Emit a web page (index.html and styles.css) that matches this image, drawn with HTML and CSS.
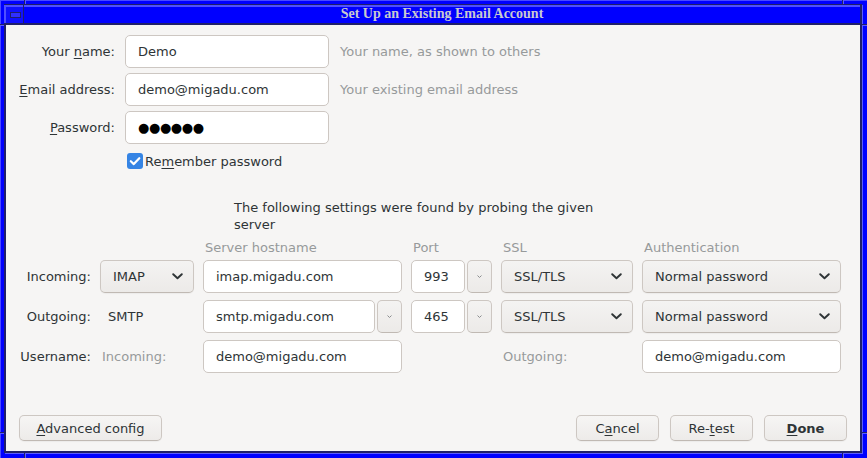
FILE: index.html
```html
<!DOCTYPE html>
<html>
<head>
<meta charset="utf-8">
<title>Set Up an Existing Email Account</title>
<link rel="stylesheet" href="styles.css">
</head>
<body>
<div class="frame">
  <span class="notch notch-v notch-top-l"></span>
  <span class="notch notch-v notch-top-r"></span>
  <span class="notch notch-v notch-bot-l"></span>
  <span class="notch notch-v notch-bot-r"></span>
  <span class="notch notch-h notch-left-t"></span>
  <span class="notch notch-h notch-left-b"></span>
  <span class="notch notch-h notch-right-t"></span>
  <span class="notch notch-h notch-right-b"></span>
  <div class="win">
    <div class="titlebar">
      <div class="menubtn"><span class="menuicon"></span></div>
      <div class="title">Set Up an Existing Email Account</div>
    </div>
    <div class="dialog">
      <div class="identity">
        <div class="lbl">Your <u>n</u>ame:</div>
        <div class="field">Demo</div>
        <div class="hint">Your name, as shown to others</div>

        <div class="lbl"><u>E</u>mail address:</div>
        <div class="field">demo@migadu.com</div>
        <div class="hint">Your existing email address</div>

        <div class="lbl"><u>P</u>assword:</div>
        <div class="field dots">●●●●●●</div>
        <div class="hint"></div>

        <div class="remember">
          <span class="check"><svg width="16" height="16" viewBox="0 0 16 16"><path d="M3.8 8.2 L6.8 11.1 L12.3 5.2" fill="none" stroke="#ffffff" stroke-width="2.2" stroke-linecap="round" stroke-linejoin="round"/></svg></span>
          <span>Re<u>m</u>ember password</span>
        </div>
      </div>

      <p class="probe">The following settings were found by probing the given server</p>

      <div class="servers servers-head">
        <span></span>
        <span></span>
        <span class="colhead">Server hostname</span>
        <span class="colhead">Port</span>
        <span class="colhead">SSL</span>
        <span class="colhead">Authentication</span>
      </div>

      <div class="servers">
        <div class="rowlbl">Incoming:</div>
        <div class="combo"><span>IMAP</span><svg class="chev" width="11" height="7" viewBox="0 0 11 7"><path d="M1.2 1.2 L5.5 5.3 L9.8 1.2" fill="none" stroke="#2e3436" stroke-width="1.9" stroke-linecap="round" stroke-linejoin="round"/></svg></div>
        <div class="field">imap.migadu.com</div>
        <div class="pair">
          <div class="field port">993</div>
          <div class="spin"><svg width="5" height="3" viewBox="0 0 5 3"><path d="M0.5 0.5 L2.5 2.5 L4.5 0.5" fill="none" stroke="#8a8c8e" stroke-width="1"/></svg></div>
        </div>
        <div class="combo"><span>SSL/TLS</span><svg class="chev" width="11" height="7" viewBox="0 0 11 7"><path d="M1.2 1.2 L5.5 5.3 L9.8 1.2" fill="none" stroke="#2e3436" stroke-width="1.9" stroke-linecap="round" stroke-linejoin="round"/></svg></div>
        <div class="combo"><span>Normal password</span><svg class="chev" width="11" height="7" viewBox="0 0 11 7"><path d="M1.2 1.2 L5.5 5.3 L9.8 1.2" fill="none" stroke="#2e3436" stroke-width="1.9" stroke-linecap="round" stroke-linejoin="round"/></svg></div>

        <div class="rowlbl">Outgoing:</div>
        <div class="plain">SMTP</div>
        <div class="pair">
          <div class="field grow">smtp.migadu.com</div>
          <div class="spin"><svg width="5" height="3" viewBox="0 0 5 3"><path d="M0.5 0.5 L2.5 2.5 L4.5 0.5" fill="none" stroke="#8a8c8e" stroke-width="1"/></svg></div>
        </div>
        <div class="pair">
          <div class="field port">465</div>
          <div class="spin"><svg width="5" height="3" viewBox="0 0 5 3"><path d="M0.5 0.5 L2.5 2.5 L4.5 0.5" fill="none" stroke="#8a8c8e" stroke-width="1"/></svg></div>
        </div>
        <div class="combo"><span>SSL/TLS</span><svg class="chev" width="11" height="7" viewBox="0 0 11 7"><path d="M1.2 1.2 L5.5 5.3 L9.8 1.2" fill="none" stroke="#2e3436" stroke-width="1.9" stroke-linecap="round" stroke-linejoin="round"/></svg></div>
        <div class="combo"><span>Normal password</span><svg class="chev" width="11" height="7" viewBox="0 0 11 7"><path d="M1.2 1.2 L5.5 5.3 L9.8 1.2" fill="none" stroke="#2e3436" stroke-width="1.9" stroke-linecap="round" stroke-linejoin="round"/></svg></div>

        <div class="rowlbl">Username:</div>
        <div class="plain dim">Incoming:</div>
        <div class="field">demo@migadu.com</div>
        <div></div>
        <div class="plain dim">Outgoing:</div>
        <div class="field">demo@migadu.com</div>
      </div>

      <div class="actions">
        <button class="btn btn-wide"><u>A</u>dvanced config</button>
        <div class="spacer"></div>
        <button class="btn">C<u>a</u>ncel</button>
        <button class="btn">Re-<u>t</u>est</button>
        <button class="btn btn-default"><u>D</u>one</button>
      </div>
    </div>
  </div>
</div>
</body>
</html>
```
FILE: styles.css
```css
html, body {
  margin: 0;
  padding: 0;
  background: #0000ff;
  overflow: hidden;
}

.frame {
  position: relative;
  width: 867px;
  height: 458px;
  box-sizing: border-box;
  padding: 4px 5px 5px 4px;
  background: #0000ff;
  box-shadow: inset 1px 1px 0 #4a4aff;
}

.notch {
  position: absolute;
  background: #20206a;
}
.notch-v { width: 1px; height: 4px; box-shadow: 1px 0 0 #5a5aff; }
.notch-h { width: 4px; height: 1px; box-shadow: 0 1px 0 #5a5aff; }
.notch-top-l { left: 24px; top: 0; }
.notch-top-r { left: 842px; top: 0; }
.notch-bot-l { left: 24px; bottom: 0; height: 5px; }
.notch-bot-r { left: 842px; bottom: 0; height: 5px; }
.notch-left-t { left: 0; top: 24px; }
.notch-left-b { left: 0; top: 432px; }
.notch-right-t { right: 0; top: 24px; width: 5px; }
.notch-right-b { right: 0; top: 432px; width: 5px; }

.win {
  height: 100%;
  display: flex;
  flex-direction: column;
  box-shadow: 1px 1px 0 #5a5aff;
}

.titlebar {
  display: flex;
  height: 18px;
  border-top: 1px solid #20206a;
  border-right: 2px solid #20206a;
  background: #0000ff;
}

.menubtn {
  width: 19px;
  height: 18px;
  border-right: 1px solid #20206a;
  box-shadow: inset 2px 2px 0 #5050ff;
  background: #1010ff;
  display: flex;
  align-items: flex-start;
  justify-content: flex-start;
}

.menuicon {
  display: block;
  width: 9px;
  height: 4px;
  margin: 7px 0 0 6px;
  border: 1px solid #20206a;
  background: #3030ff;
}

.title {
  flex: 1;
  height: 18px;
  box-shadow: inset 0 2px 0 #5050ff;
  font-family: "Liberation Serif", serif;
  font-weight: bold;
  font-size: 14px;
  line-height: 18px;
  color: #c9c9cf;
  text-align: center;
}

.dialog {
  flex: 1;
  display: flex;
  flex-direction: column;
  border: 2px solid #20206a;
  background: #f6f5f4;
  padding: 10px 13px;
  font-family: "DejaVu Sans", sans-serif;
  font-size: 13px;
  color: #2e3436;
}

u {
  text-decoration: underline;
  text-underline-offset: 2px;
}

/* identity block */
.identity {
  display: grid;
  grid-template-columns: 96px 204px 1fr;
  grid-template-rows: 33px 33px 33px auto;
  column-gap: 10px;
  row-gap: 5px;
  align-items: center;
}

.lbl {
  text-align: right;
  white-space: nowrap;
}

.hint {
  margin-left: 1px;
  color: #979a9b;
}

.field {
  box-sizing: border-box;
  height: 33px;
  display: flex;
  align-items: center;
  padding: 0 12px;
  background: #ffffff;
  border: 1px solid #cdc7c2;
  border-radius: 5px;
  color: #2e3436;
  white-space: nowrap;
  overflow: hidden;
}

.dots {
  color: #000000;
  letter-spacing: -0.4px;
  font-size: 13px;
}

.remember {
  grid-column: 2 / 4;
  display: flex;
  align-items: center;
  gap: 2px;
  height: 16px;
  margin: 4px 0 0 2px;
}

.check {
  width: 16px;
  height: 16px;
  border-radius: 3px;
  background: #3584e4;
  display: block;
}
.check svg { display: block; }

/* description */
.probe {
  margin: 30px 0 0 215px;
  width: 370px;
  line-height: 17px;
}

/* server grid */
.servers {
  display: grid;
  grid-template-columns: 71px 94px 199px 81px 132px 199px;
  column-gap: 9px;
  row-gap: 7px;
  grid-auto-rows: 33px;
  align-items: center;
  margin-left: 1px;
}

.servers-head {
  grid-auto-rows: 17px;
  margin-top: 6px;
  margin-bottom: 4px;
}

.colhead {
  padding-left: 2px;
  color: #979a9b;
  line-height: 17px;
  white-space: nowrap;
}

.rowlbl {
  text-align: right;
  white-space: nowrap;
}

.plain {
  padding-left: 8px;
  white-space: nowrap;
}
.plain.dim {
  padding-left: 2px;
  color: #979a9b;
}

.combo {
  box-sizing: border-box;
  height: 33px;
  display: flex;
  align-items: center;
  justify-content: space-between;
  padding: 0 10px 0 12px;
  border: 1px solid #cdc7c2;
  border-bottom-color: #c0b9b3;
  border-radius: 5px;
  background: linear-gradient(to bottom, #f4f3f2, #eceae8);
  box-shadow: 0 1px 1px rgba(0, 0, 0, 0.04);
  white-space: nowrap;
}

.combo .chev { display: block; }

.pair {
  display: flex;
  gap: 2px;
  height: 33px;
}

.pair .field.grow { flex: 1; }
.pair .field.port { width: 54px; }

.spin {
  box-sizing: border-box;
  width: 25px;
  height: 33px;
  display: flex;
  align-items: center;
  justify-content: center;
  border: 1px solid #cdc7c2;
  border-bottom-color: #c0b9b3;
  border-radius: 5px;
  background: linear-gradient(to bottom, #f4f3f2, #eceae8);
}
.spin svg { display: block; }

/* bottom buttons */
.actions {
  margin-top: auto;
  display: flex;
  gap: 11px;
}

.spacer { flex: 1; }

.btn {
  box-sizing: border-box;
  height: 26px;
  width: 83px;
  padding: 0;
  font-family: "DejaVu Sans", sans-serif;
  font-size: 13px;
  color: #2e3436;
  border: 1px solid #cdc7c2;
  border-bottom-color: #c0b9b3;
  border-radius: 5px;
  background: linear-gradient(to bottom, #f6f5f4, #edebe9);
  box-shadow: 0 1px 1px rgba(0, 0, 0, 0.04);
}

.btn-wide { width: 143px; }

.btn-default { font-weight: bold; }
```
